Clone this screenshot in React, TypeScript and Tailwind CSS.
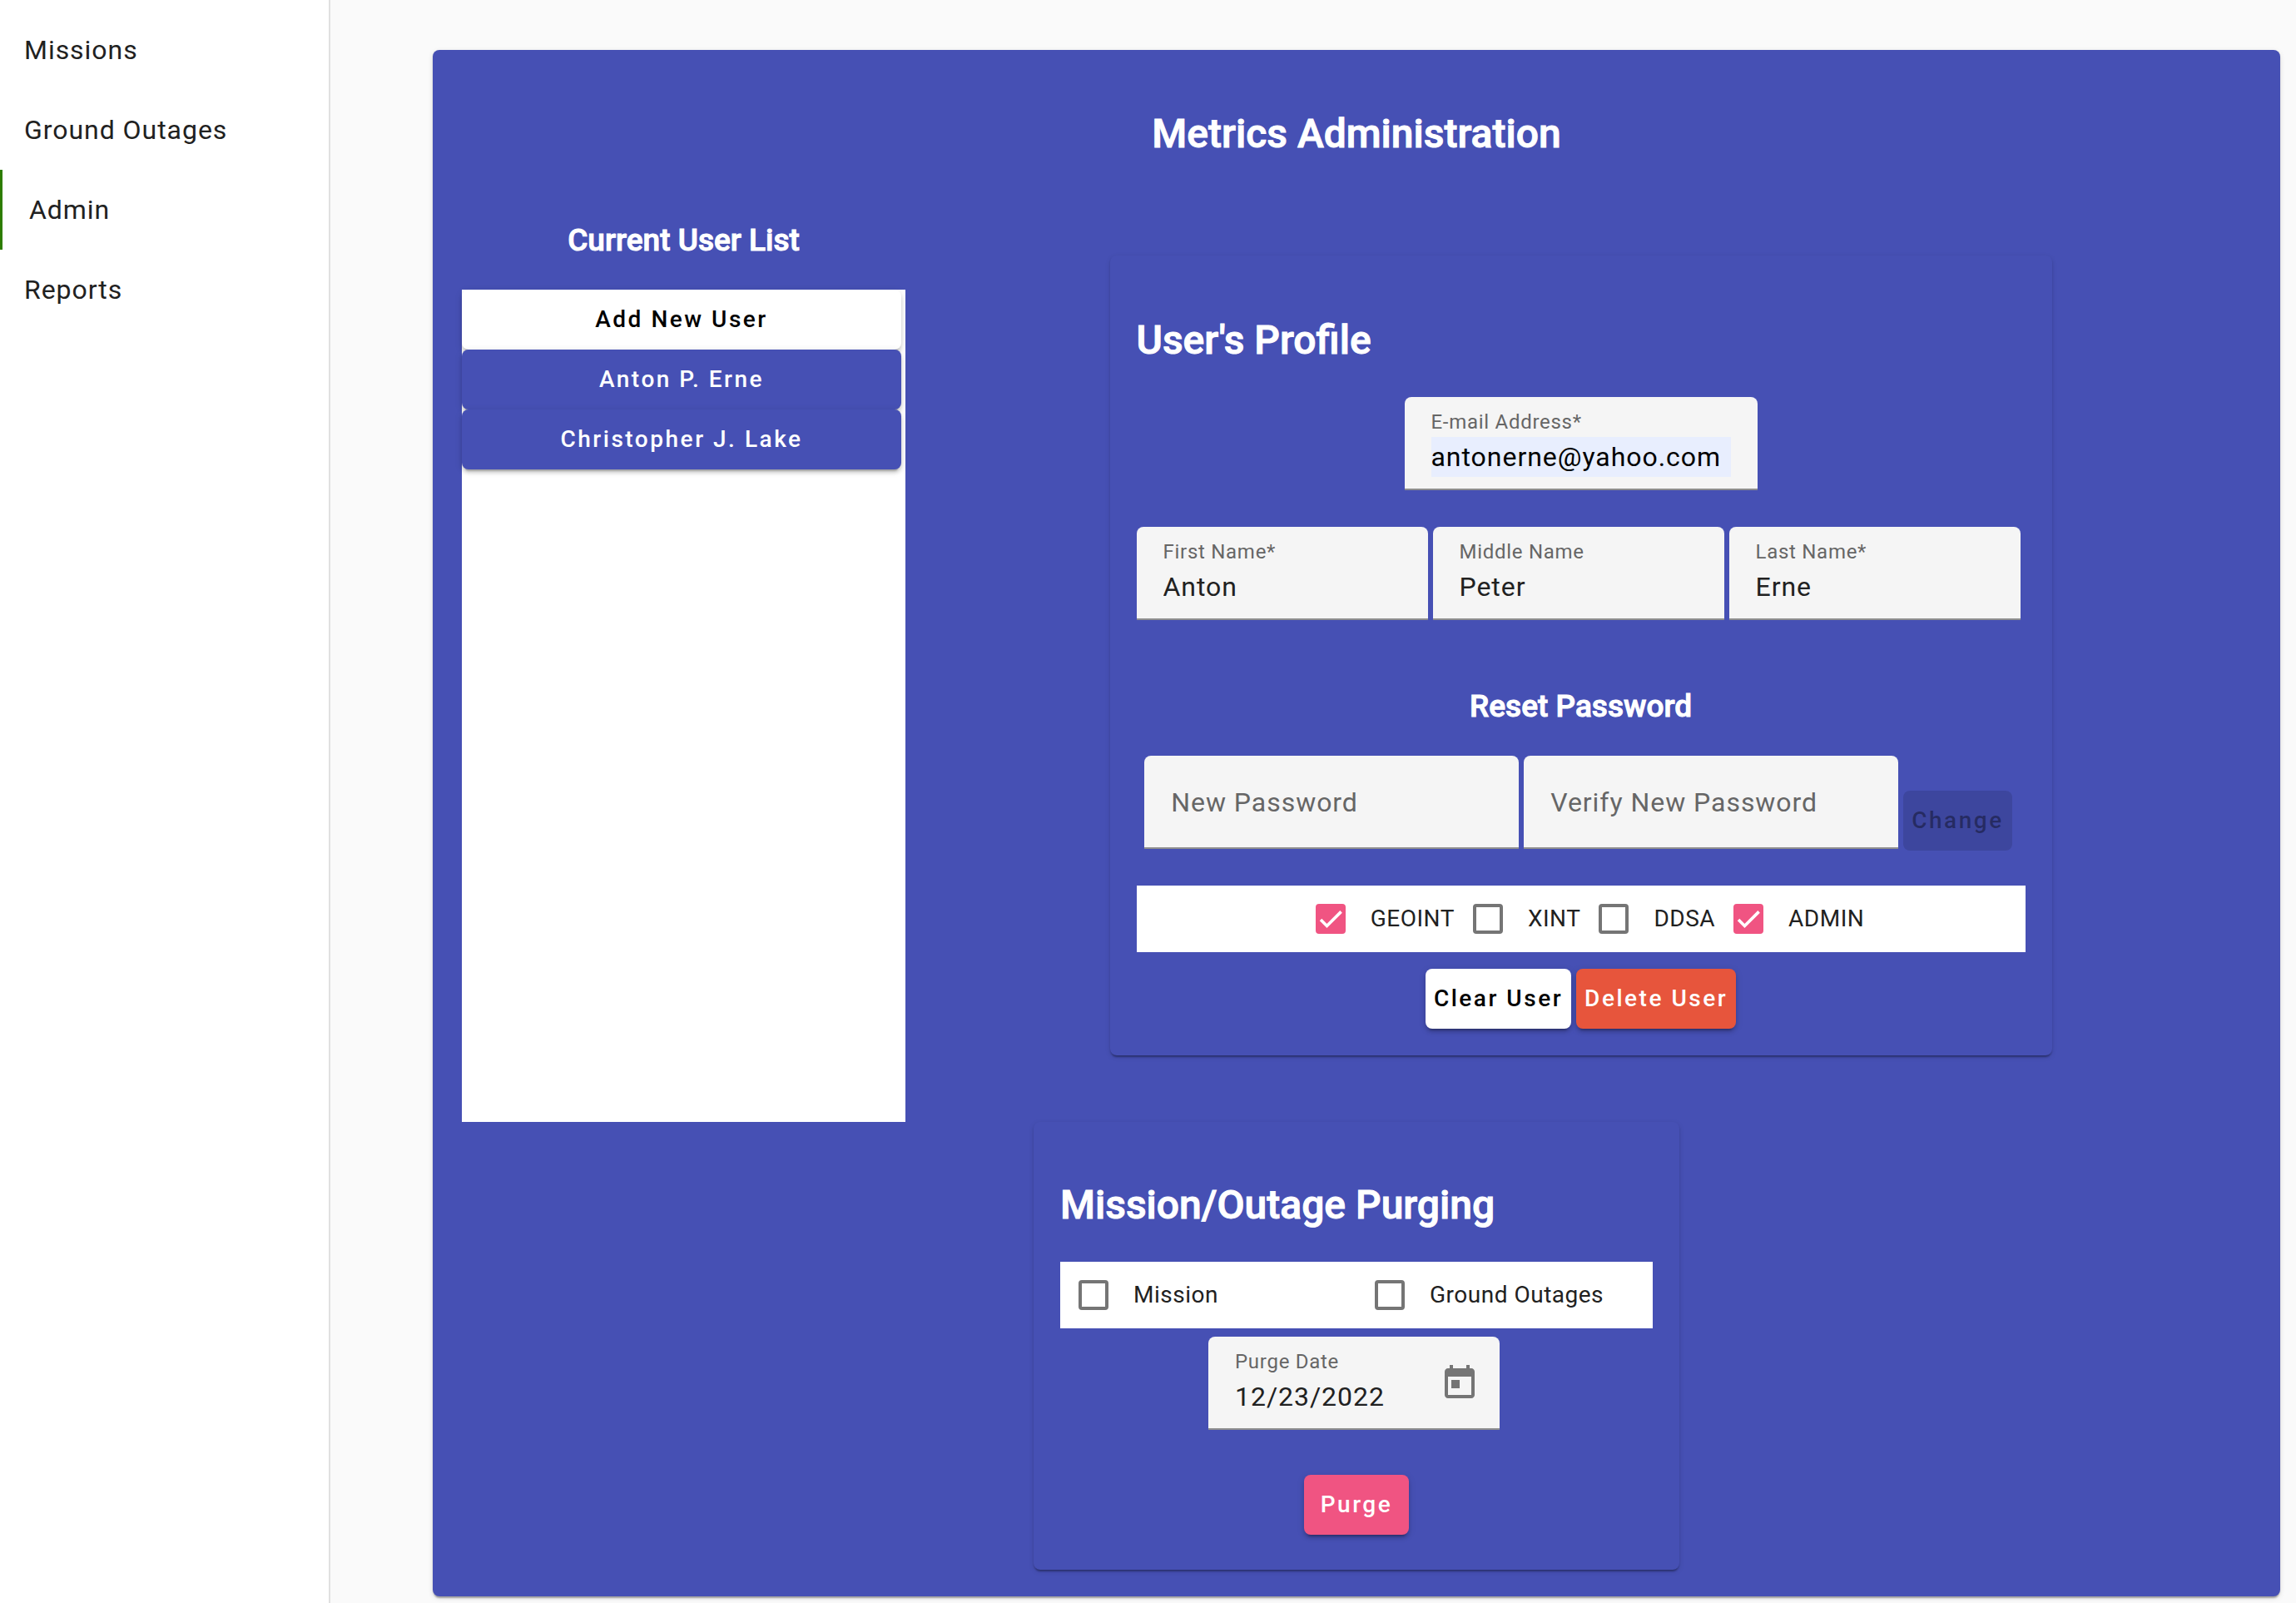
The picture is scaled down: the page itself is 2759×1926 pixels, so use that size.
import { useId, useState } from "react";
import type { ReactNode } from "react";
import { clsx } from "clsx";

const navItems = ["Missions", "Ground Outages", "Admin", "Reports"];
const users = ["Anton P. Erne", "Christopher J. Lake"];

const cardShadow =
  "shadow-[0_4px_2px_-2px_rgba(0,0,0,0.2),0_2px_2px_0_rgba(0,0,0,0.14),0_2px_6px_0_rgba(0,0,0,0.12)]";
const raisedShadow =
  "shadow-[0_6px_2px_-4px_rgba(0,0,0,0.2),0_4px_4px_0_rgba(0,0,0,0.14),0_2px_10px_0_rgba(0,0,0,0.12)]";
const titleText = "text-5xl leading-16 font-medium [-webkit-text-stroke:1px_white]";
const subtitleText =
  "text-center text-[37px] leading-14 font-medium [-webkit-text-stroke:1px_white]";

function Button({
  children,
  className,
  disabled,
}: {
  children: ReactNode;
  className: string;
  disabled?: boolean;
}) {
  return (
    <button
      type="button"
      disabled={disabled}
      className={clsx(
        "h-[72px] rounded-lg text-[28px] font-medium tracking-[0.09em] whitespace-nowrap",
        !disabled && raisedShadow,
        className,
      )}
    >
      {children}
    </button>
  );
}

function Field({
  label,
  value,
  type = "text",
  className,
  inputClassName,
  children,
}: {
  label: string;
  value: string;
  type?: string;
  className?: string;
  inputClassName?: string;
  children?: ReactNode;
}) {
  const id = useId();
  return (
    <div
      className={clsx(
        "flex h-[112px] items-center rounded-t-lg border-b-2 border-[#8e8e8e] bg-[#f5f5f5] pl-8",
        className,
      )}
    >
      <div className="flex min-w-0 flex-1 flex-col gap-0.5">
        <label htmlFor={id} className="text-2xl leading-8 tracking-[0.03em] text-[#666666]">
          {label}
        </label>
        <input
          id={id}
          type={type}
          defaultValue={value}
          className={clsx(
            "h-12 w-full text-[32px] tracking-[0.03em] outline-none",
            inputClassName ?? "text-[#212121]",
          )}
        />
      </div>
      {children}
    </div>
  );
}

function PasswordField({ label }: { label: string }) {
  const id = useId();
  return (
    <div className="relative mb-0.5 h-[112px] w-[450px] rounded-t-lg border-b-2 border-[#8e8e8e] bg-[#f5f5f5]">
      <input
        id={id}
        type="password"
        placeholder=" "
        className="peer h-full w-full px-8 text-[32px] tracking-[0.03em] text-[#212121] outline-none"
      />
      <label
        htmlFor={id}
        className="absolute inset-0 hidden items-center px-8 pt-0.5 text-[32px] tracking-[0.03em] text-[#666666] peer-placeholder-shown:flex"
      >
        {label}
      </label>
    </div>
  );
}

function Checkbox({ label, initial = false }: { label: string; initial?: boolean }) {
  const [checked, setChecked] = useState(initial);
  const id = useId();
  return (
    <div className="flex h-20 items-center">
      <span className="relative mx-[22px] size-9">
        <input
          id={id}
          type="checkbox"
          checked={checked}
          onChange={() => setChecked(!checked)}
          className="block size-9 appearance-none rounded-sm border-4 border-[#757575] checked:border-[#f05482] checked:bg-[#f05482]"
        />
        {checked && (
          <svg
            viewBox="0 0 24 24"
            className="pointer-events-none absolute inset-1 size-7"
            fill="none"
            stroke="#fff"
            strokeWidth="3.12"
            aria-hidden="true"
          >
            <path d="M1.73 12.91 8.1 19.28 22.79 4.59" />
          </svg>
        )}
      </span>
      <label htmlFor={id} className="pl-2 text-[28px] tracking-[0.018em] text-[#212121]">
        {label}
      </label>
    </div>
  );
}

export default function App() {
  return (
    <div className="flex min-h-screen bg-[#fafafa] font-['Roboto',sans-serif]">
      <nav className="w-[397px] shrink-0 border-r-2 border-[#e0e0e0] bg-white pt-3">
        {navItems.map((item) => (
          <a
            key={item}
            href="#"
            className={clsx(
              "flex h-24 items-center text-[32px] tracking-[0.03em] text-[#212121]",
              item === "Admin" ? "border-l-[3px] border-[#2d7d00] pl-8" : "pl-[29px]",
            )}
          >
            {item}
          </a>
        ))}
      </nav>

      <main className="flex-1 pt-[60px] pr-[19px] pb-2 pl-[123px]">
        <div className={clsx("rounded-lg bg-[#4650b4] p-8 text-white", cardShadow)}>
          <h1 className={clsx("pt-[37px] text-center", titleText)}>Metrics Administration</h1>

          <div className="flex">
            <section className="w-1/4 px-[3px] pt-[68px]">
              <h2 className={subtitleText}>Current User List</h2>
              <div className="mt-[31px] flex h-[1000px] flex-col bg-white pr-[5px]">
                <Button className="bg-white text-black">Add New User</Button>
                {users.map((user) => (
                  <Button key={user} className="bg-[#4650b4] text-white">
                    {user}
                  </Button>
                ))}
              </div>
            </section>

            <section className="flex flex-1 items-start justify-center pt-[114px]">
              <div className={clsx("w-[1132px] rounded-lg px-8 pt-[70px] pb-8", cardShadow)}>
                <h1 className={titleText}>User's Profile</h1>
                <div className="mt-9 flex justify-center">
                  <Field
                    label="E-mail Address*"
                    type="email"
                    value="antonerne@yahoo.com"
                    className="w-[424px] pr-8"
                    inputClassName="bg-[#e8eefe] text-black"
                  />
                </div>
                <div className="mt-11 flex gap-1.5">
                  <Field label="First Name*" value="Anton" className="w-[350px] pr-8" />
                  <Field label="Middle Name" value="Peter" className="w-[350px] pr-8" />
                  <Field label="Last Name*" value="Erne" className="w-[350px] pr-8" />
                </div>

                <h2 className={clsx("mt-[76px]", subtitleText)}>Reset Password</h2>
                <div className="mt-[31px] flex items-end justify-center gap-1.5 pr-1.5">
                  <PasswordField label="New Password" />
                  <PasswordField label="Verify New Password" />
                  <Button disabled className="bg-black/12 px-2.5 text-black/38">
                    Change
                  </Button>
                </div>

                <div className="mt-[42px] flex justify-center bg-white">
                  <Checkbox label="GEOINT" initial />
                  <Checkbox label="XINT" />
                  <Checkbox label="DDSA" />
                  <Checkbox label="ADMIN" initial />
                </div>
                <div className="mt-5 flex justify-center gap-1.5">
                  <Button className="bg-white px-2.5 text-black">Clear User</Button>
                  <Button className="bg-[#e7553c] px-2.5 text-white">Delete User</Button>
                </div>
              </div>
            </section>
          </div>

          <section
            className={clsx("mx-auto w-[776px] rounded-lg px-8 pt-[68px] pb-[42px]", cardShadow)}
          >
            <h1 className={titleText}>Mission/Outage Purging</h1>
            <div className="mt-9 grid grid-cols-2 bg-white">
              <Checkbox label="Mission" />
              <Checkbox label="Ground Outages" />
            </div>
            <div className="mt-2.5 flex justify-center pr-1.5">
              <Field label="Purge Date" value="12/23/2022" className="w-[350px]">
                <button
                  type="button"
                  aria-label="Open calendar"
                  className="flex size-24 items-center justify-center pt-0.5 text-[#757575]"
                >
                  <svg viewBox="0 0 24 24" className="size-12" fill="currentColor" aria-hidden="true">
                    <path d="M19 3h-1V1h-2v2H8V1H6v2H5c-1.11 0-1.99.9-1.99 2L3 19c0 1.1.89 2 2 2h14c1.1 0 2-.9 2-2V5c0-1.1-.9-2-2-2zm0 16H5V8h14v11zM7 10h5v5H7z" />
                  </svg>
                </button>
              </Field>
            </div>
            <div className="mt-[54px] flex justify-center">
              <Button className="bg-[#f05482] px-5 text-white">Purge</Button>
            </div>
          </section>
        </div>
      </main>
    </div>
  );
}
